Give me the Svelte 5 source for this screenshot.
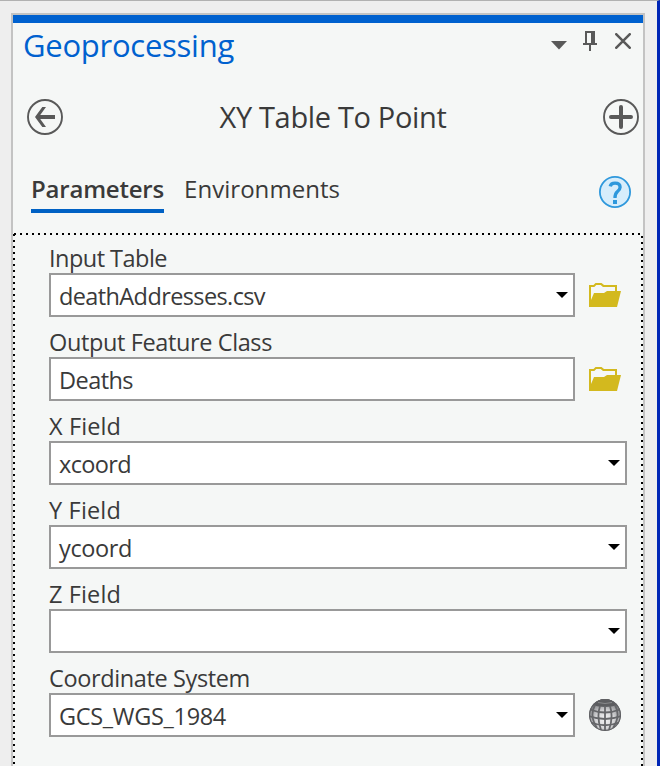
<script>
  const fields = [
    { label: 'Input Table', value: 'deathAddresses.csv', menu: true, icon: 'folder', labelWidth: 118, valueWidth: 206 },
    { label: 'Output Feature Class', value: 'Deaths', menu: false, icon: 'folder', labelWidth: 223, valueWidth: 74 },
    { label: 'X Field', value: 'xcoord', menu: true, icon: '', labelWidth: 72, valueWidth: 72 },
    { label: 'Y Field', value: 'ycoord', menu: true, icon: '', labelWidth: 72, valueWidth: 73 },
    { label: 'Z Field', value: '', menu: true, icon: '', labelWidth: 72, valueWidth: 0 },
    { label: 'Coordinate System', value: 'GCS_WGS_1984', menu: true, icon: 'globe', labelWidth: 201, valueWidth: 167 }
  ];

  // Tightens or loosens tracking so a run of text fills the given width.
  function fit(node, width) {
    if (!width) return;
    const natural = node.getBoundingClientRect().width;
    node.style.letterSpacing = (width - natural) / node.textContent.length + 'px';
  }
</script>

<div class="screen">
  <section class="panel">
    <header class="caption">
      <h1><span use:fit={211}>Geoprocessing</span></h1>
      <div class="controls">
        <svg width="16" height="9" viewBox="0 0 16 9"><path d="M0 0H16L8 8.5Z" fill="#595959" /></svg>
        <svg class="pin" width="14" height="20" viewBox="0 0 14 20" fill="#595959" shape-rendering="crispEdges"><path fill-rule="evenodd" d="M2 0H12V12H14V14H8V20H6V14H0V12H2ZM4 2V12H8V2Z" /></svg>
        <svg class="close" width="16" height="16" viewBox="0 0 16 16"><path d="M.4 .4L15.6 15.6M15.6 .4L.4 15.6" stroke="#595959" stroke-width="2.5" /></svg>
      </div>
    </header>
    <div class="tool">
      <svg width="36" height="36" viewBox="0 0 36 36" fill="none" stroke="#595959"><circle cx="18" cy="18" r="17" stroke-width="1.9" /><path d="M28 18H11" stroke-width="4" /><path d="M15.3 8H19L11.8 18L19 28H15.3L8 18Z" fill="#595959" stroke="none" /></svg>
      <h2><span use:fit={227}>XY Table To Point</span></h2>
      <svg width="36" height="36" viewBox="0 0 36 36" fill="none" stroke="#595959"><circle cx="18" cy="18" r="17" stroke-width="1.9" /><path d="M8 18H28M18 8V28" stroke-width="4" stroke-linecap="round" /></svg>
    </div>
    <nav>
      <span class="tab active"><span use:fit={133}>Parameters</span></span>
      <span class="tab"><span use:fit={156}>Environments</span></span>
      <svg class="help" width="32" height="32" viewBox="0 0 32 32"><circle cx="16" cy="16" r="15.1" fill="#d7edfb" stroke="#2e98dc" stroke-width="1.8" /><path d="M11.2 10.3C11.7 8.2 13.6 7.2 16 7.2C19.2 7.2 21.1 8.9 21.1 11.3C21.1 13.4 19.9 14.5 18.3 15.8C16.7 17.1 16 18.2 16 21.9" fill="none" stroke="#2e98dc" stroke-width="3.3" /><rect x="14" y="24" width="4" height="4" fill="#2e98dc" /></svg>
    </nav>
    <div class="form">
      <svg class="dots" width="630" height="534" stroke="#000" stroke-width="2" stroke-dasharray="2 4" shape-rendering="crispEdges"><path d="M1 1H629" /><path d="M1 1V534M629 3V534" /></svg>
      {#each fields as field}
        <div class="field">
          <div class="label"><span use:fit={field.labelWidth}>{field.label}</span></div>
          <div class="line">
            <div class="box">
              <span use:fit={field.valueWidth}>{field.value}</span>
              {#if field.menu}
                <svg width="12" height="6" viewBox="0 0 12 6"><path d="M0 0H12L6 6Z" fill="#000" /></svg>
              {/if}
            </div>
            {#if field.icon === 'folder'}
              <svg class="tail" width="32" height="24" viewBox="0 0 32 24" fill="#d3b91e"><path fill-rule="evenodd" d="M0 24V2H4.5L6.5 0H12.5L15 2H28V8H32L28 24ZM2 4V17L5 10H15L18 8H26V4H14L11.7 2H7.3L5.3 4Z" /></svg>
            {:else if field.icon === 'globe'}
              <svg class="tail" width="32" height="32" viewBox="0 0 32 32">
                <defs>
                  <radialGradient id="ball" cx=".5" cy=".64" r=".62"><stop offset="0" stop-color="#f4f4f5" /><stop offset=".45" stop-color="#d5d5d7" /><stop offset=".8" stop-color="#97989b" /><stop offset="1" stop-color="#5d5e61" /></radialGradient>
                  <clipPath id="disc"><circle cx="16" cy="16" r="16" /></clipPath>
                </defs>
                <g clip-path="url(#disc)">
                  <rect width="32" height="32" fill="url(#ball)" />
                  <path d="M3 0H29V6Q16 10 3 6Z" fill="#5c5d60" />
                  <g fill="none" stroke="#66676a" stroke-width="1.8">
                    <path d="M1 10.5Q16 16.5 31 10.5M0 17Q16 23 32 17M2 23.5Q16 29 30 23.5" />
                    <path d="M16 7V32M11 7Q7.4 18 12 31M21 7Q24.6 18 20 31M6 6Q0 17 8 29M26 6Q32 17 24 29" />
                  </g>
                  <path d="M9 3.5Q16 5.5 23 3.5" fill="none" stroke="#88898b" />
                </g>
                <circle cx="16" cy="16" r="15.4" fill="none" stroke="#606164" stroke-width="1.2" />
              </svg>
            {/if}
          </div>
        </div>
      {/each}
    </div>
  </section>
</div>

<style>
  :global(body) { margin: 0; overflow: hidden; }
  .screen {
    box-sizing: border-box;
    width: 660px;
    height: 766px;
    padding: 12px 12px 0 11px;
    border-top: 1px solid #b1b1b1;
    border-right: 3px solid #0026b6;
    background: #eee;
    overflow: hidden;
    color: #3a3a3a;
    font-family: "Open Sans", "Noto Sans", sans-serif;
    white-space: nowrap;
  }
  .panel {
    box-sizing: border-box;
    width: 634px;
    height: 753px;
    border: 2px solid #c3c3c3;
    border-bottom: 0;
    background: #f5f7f6;
  }
  h1, h2 { margin: 0; font-weight: 400; }
  .caption {
    display: flex;
    justify-content: space-between;
    height: 48px;
    padding: 0 12px 0 10px;
    border-top: 8px solid #0061cf;
  }
  h1 { color: #0061cf; font-size: 31px; line-height: 44px; }
  .controls { display: flex; align-items: flex-start; padding-top: 18px; }
  .pin { margin: -10px 0 0 16px; }
  .close { margin: -8px 0 0 18px; }
  .tool {
    display: flex;
    align-items: center;
    justify-content: space-between;
    height: 36px;
    margin-top: 28px;
    padding: 0 4px 0 14px;
  }
  h2 { font-size: 29px; line-height: 36px; }
  nav {
    display: flex;
    align-items: flex-start;
    height: 58px;
    margin-top: 40px;
    padding: 0 12px 0 18px;
    font-size: 24px;
  }
  .tab { height: 34px; line-height: 27px; margin-right: 20px; border-bottom: 4px solid transparent; }
  .active { font-weight: 600; border-color: #0061c4; }
  .help { margin: 1px 0 0 auto; }
  .form { position: relative; height: 523px; padding: 12px 16px 0 36px; }
  .dots { position: absolute; left: 0; top: 0; pointer-events: none; fill: none; }
  .field { height: 84px; }
  .label { height: 28px; font-size: 23.5px; line-height: 27px; }
  .line { display: flex; align-items: center; height: 44px; }
  .box {
    display: flex;
    flex: 1;
    align-items: center;
    justify-content: space-between;
    box-sizing: border-box;
    height: 44px;
    padding: 1px 5px 0 8px;
    border: 2px solid #999;
    background: #fff;
    font-size: 23.5px;
    line-height: 38px;
  }
  .box svg { margin-top: -1px; }
  .tail { flex: none; margin: 0 6px 0 14px; }
</style>
